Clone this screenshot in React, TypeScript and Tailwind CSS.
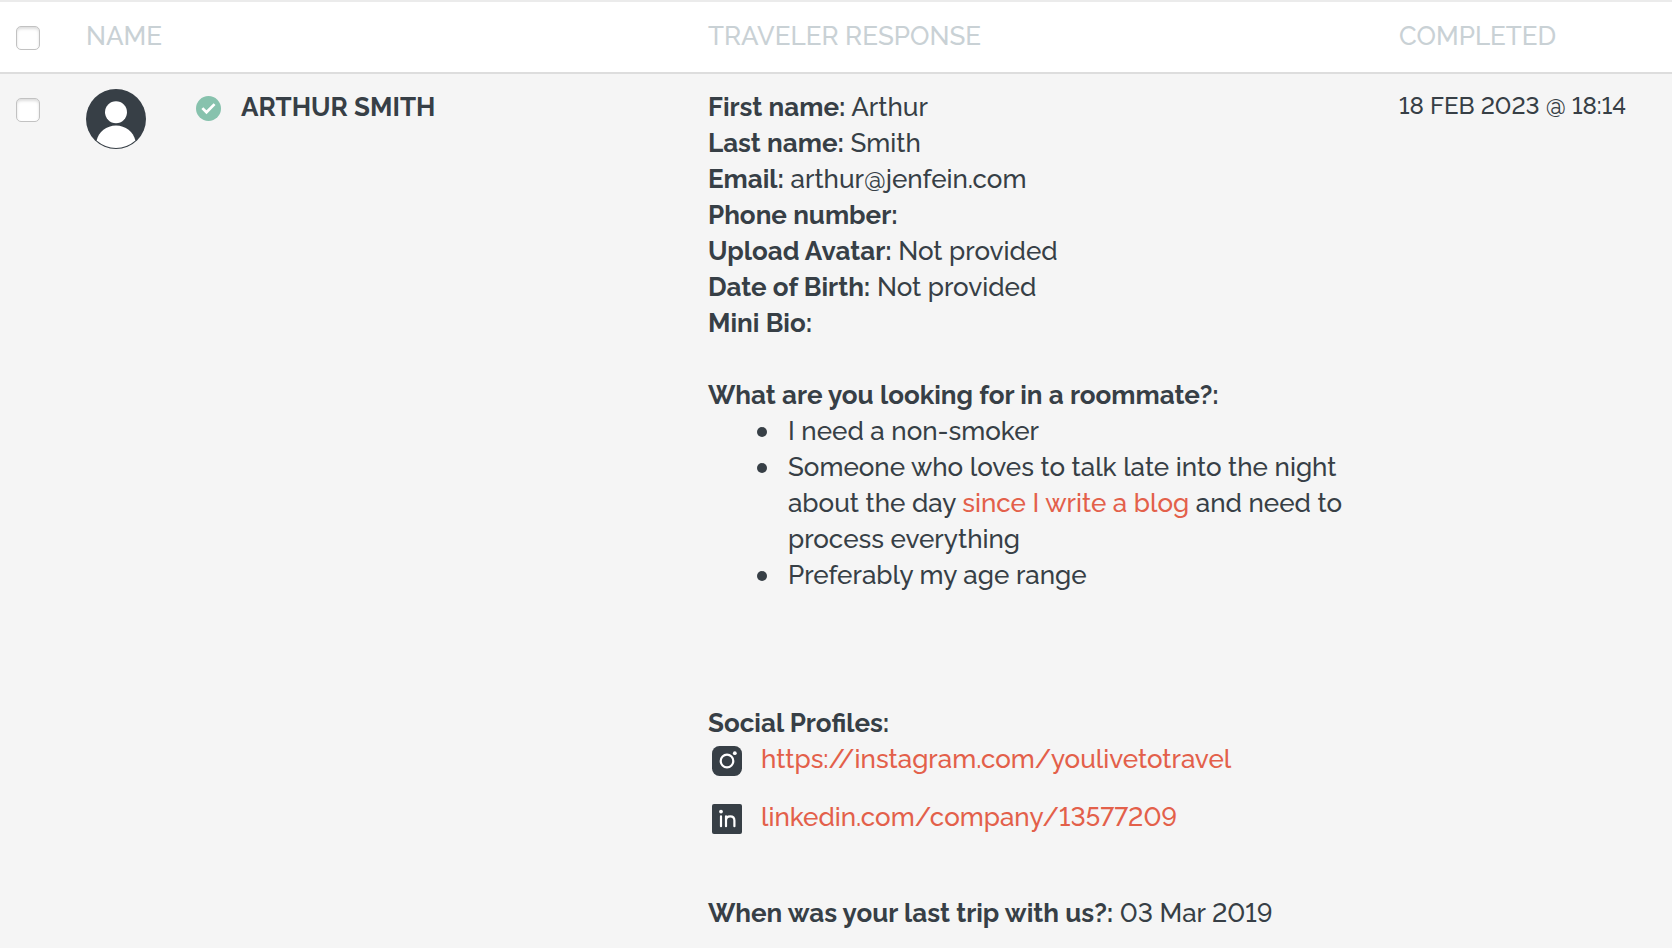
import React from 'react';

type Field = { label: string; value?: string };

const FIELDS: Field[] = [
  { label: 'First name', value: 'Arthur' },
  { label: 'Last name', value: 'Smith' },
  { label: 'Email', value: 'arthur@jenfein.com' },
  { label: 'Phone number' },
  { label: 'Upload Avatar', value: 'Not provided' },
  { label: 'Date of Birth', value: 'Not provided' },
  { label: 'Mini Bio' },
];

const AvatarIcon = () => (
  <svg viewBox="0 0 60 60" className="w-[60px] h-[60px] shrink-0" aria-hidden="true">
    <circle cx="30" cy="30" r="30" fill="#373f46" />
    <circle cx="30" cy="23.3" r="11" fill="#fff" />
    <path d="M10.6 51.6C12.5 43 20.5 36.6 30 36.6S47.5 43 49.4 51.6A29.3 29.3 0 0 1 10.6 51.6Z" fill="#fff" />
  </svg>
);

const CompletedIcon = () => (
  <svg viewBox="0 0 26 26" className="w-[25px] h-[25px] shrink-0" role="img" aria-label="Completed">
    <circle cx="13" cy="13" r="13" fill="#87c2ad" />
    <path d="M6.6 12.6l4.3 4.3 8.4-8.4" fill="none" stroke="#fff" strokeWidth="2.8" />
  </svg>
);

const InstagramIcon = () => (
  <svg viewBox="0 0 30 30" className="w-[30px] h-[30px] shrink-0" aria-hidden="true">
    <rect width="30" height="30" rx="7.5" fill="#373f46" />
    <circle cx="15" cy="15" r="6.3" fill="none" stroke="#fff" strokeWidth="2.2" />
    <circle cx="22.8" cy="7.2" r="1.9" fill="#fff" />
  </svg>
);

const LinkedinIcon = () => (
  <svg viewBox="0 0 30 30" className="w-[30px] h-[30px] shrink-0" aria-hidden="true">
    <rect width="30" height="30" rx="2" fill="#373f46" />
    <circle cx="9" cy="7.6" r="1.9" fill="#fff" />
    <path
      d="M9 12.4v9.8M14 22.2v-9.8M14 16.6c0-2.6 1.6-4.200 4.200-4.200s4.200 1.600 4.200 4.200v5.600"
      fill="none"
      stroke="#fff"
      strokeWidth="2.2"
      strokeLinecap="round"
    />
  </svg>
);

const Checkbox: React.FC<{ label: string }> = ({ label }) => (
  <input
    type="checkbox"
    aria-label={label}
    className="block appearance-none w-6 h-6 rounded-[5px] border border-[#c2c2c2] bg-white shadow-[inset_0_2px_3px_#dddddd] checked:bg-[#87c2ad]"
  />
);

const FieldLine: React.FC<Field> = ({ label, value }) => (
  <p>
    <strong className="font-bold">{label}:</strong> {value}
  </p>
);

const ListItem: React.FC<{ children: React.ReactNode }> = ({ children }) => (
  <li className="flex gap-[21px]">
    <span className="w-[10px] h-[10px] mt-[14px] shrink-0 rounded-full bg-[#373f46]" />
    <span>{children}</span>
  </li>
);

const SocialLink: React.FC<{ icon: React.ReactNode; href: string; children: string }> = ({ icon, href, children }) => (
  <li className="flex items-start gap-[19px]">
    <span className="pt-[5px]">{icon}</span>
    <a href={href} className="text-[#e3604a] hover:underline">
      {children}
    </a>
  </li>
);

export default function App() {
  return (
    <main className="min-h-screen bg-[#f5f5f5] font-['Raleway','Lato',sans-serif] text-[26px] leading-[36px] font-medium lining-nums text-[#373f46]">
      <table className="w-full table-fixed border-collapse text-left">
        <colgroup>
          <col className="w-[86px]" />
          <col className="w-[37.2%]" />
          <col />
          <col className="w-[273px]" />
        </colgroup>
        <thead>
          <tr className="bg-white border-t-2 border-t-[#ebebeb] border-b-2 border-b-[#dddddd] text-[#c9d1d5]">
            <th className="pt-5 pb-[18px] pl-4">
              <Checkbox label="Select all travelers" />
            </th>
            <th className="pt-4 pb-[18px] font-medium">NAME</th>
            <th className="pt-4 pb-[18px] font-medium">TRAVELER RESPONSE</th>
            <th className="pt-4 pb-[18px] font-medium">COMPLETED</th>
          </tr>
        </thead>
        <tbody>
          <tr className="align-top">
            <td className="pt-6 pl-4">
              <Checkbox label="Select Arthur Smith" />
            </td>
            <td className="pt-[15px]">
              <div className="flex items-start">
                <AvatarIcon />
                <div className="flex items-start gap-5 ml-[50px]">
                  <span className="pt-[7px]">
                    <CompletedIcon />
                  </span>
                  <span className="font-bold">ARTHUR SMITH</span>
                </div>
              </div>
            </td>
            <td className="pt-[15px] pr-12">
              {FIELDS.map((field) => (
                <FieldLine key={field.label} {...field} />
              ))}

              <div className="mt-9">
                <FieldLine label="What are you looking for in a roommate?" />
                <ul className="pl-[49px]">
                  <ListItem>I need a non-smoker</ListItem>
                  <ListItem>
                    Someone who loves to talk late into the night about the day{' '}
                    <a href="#blog" className="text-[#e3604a] hover:underline">
                      since I write a blog
                    </a>{' '}
                    and need to process everything
                  </ListItem>
                  <ListItem>Preferably my age range</ListItem>
                </ul>
              </div>

              <div className="mt-28">
                <FieldLine label="Social Profiles" />
                <ul className="flex flex-col gap-[22px] pl-1">
                  <SocialLink icon={<InstagramIcon />} href="https://instagram.com/youlivetotravel">
                    https://instagram.com/youlivetotravel
                  </SocialLink>
                  <SocialLink icon={<LinkedinIcon />} href="https://linkedin.com/company/13577209">
                    linkedin.com/company/13577209
                  </SocialLink>
                </ul>
              </div>

              <div className="mt-[60px]">
                <FieldLine label="When was your last trip with us?" value="03 Mar 2019" />
              </div>
            </td>
            <td className="pt-[14px] text-[24px]">18 FEB 2023 @ 18:14</td>
          </tr>
        </tbody>
      </table>
    </main>
  );
}
